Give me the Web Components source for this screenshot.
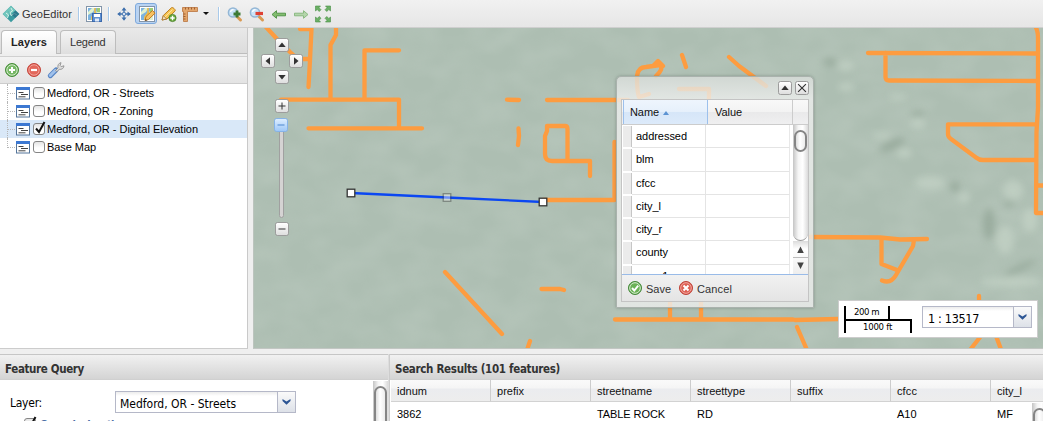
<!DOCTYPE html>
<html lang="en">
<head>
<meta charset="utf-8">
<title>GeoEditor</title>
<style>
html,body{margin:0;width:1043px;height:421px;overflow:hidden;background:#efefef;font:11px/14px "Liberation Sans",Arial,sans-serif;color:#111}
</style>
</head>
<body>
<geo-editor></geo-editor>
<script>
const define = (name, html, setup) => {
  const t = document.createElement('template');
  t.innerHTML = '<style>*{box-sizing:border-box}svg{display:block;overflow:visible}</style>' + html;
  customElements.define(name, class extends HTMLElement {
    constructor() { super(); this.attachShadow({mode: 'open'}).append(t.content.cloneNode(true)); }
    connectedCallback() { if (setup) setup(this, this.shadowRoot); }
  });
};

/* Single-line label; "w" tracks the text out to a set width. */
define('ui-label', `<style>:host{display:inline-block;white-space:nowrap;flex:none}:host([tahoma]){font-family:"DejaVu Sans Condensed","DejaVu Sans",sans-serif;font-stretch:condensed}:host([bold]){font-weight:bold}</style><slot></slot>`, el => {
  const w = +el.getAttribute('w');
  if (!w) return;
  const n = el.textContent.length, cur = el.getBoundingClientRect().width;
  if (cur) el.style.letterSpacing = ((w - cur) / n).toFixed(3) + 'px';
});

const page = (extra = '') => `<rect x=".5" y=".5" width="15" height="15" fill="#fff" stroke="#8395a9"/><rect x="2" y="2" width="12" height="12" fill="#dff0cf"/><path d="M2 6l4-4H2zM2 14V9l5-3 2-4h3l-2 5-4 3-1 4z" fill="#7cb3df"/><path d="M9 2v5l-3 4v3M9 7l5 2" fill="none" stroke="#f3bd3f" stroke-width="1.5"/><path d="M11 2h3v4h-3z" fill="#9ccc74"/>${extra}`;
const lens = s => `<path d="M9.5 10l4 4" stroke="#d99a52" stroke-width="3" stroke-linecap="round"/><circle cx="6" cy="6.5" r="4.6" fill="#c9e3f8" stroke="#93b6d5" stroke-width="1.5"/><path d="M3.5 6a3 3 0 0 1 3-2.4" stroke="#fff" stroke-width="1.3" fill="none"/>${s}`;
const ICONS = {
  logo: `<path d="M8-.3L16.3 8 8 16.3-.3 8z" fill="#3b9ba0"/><path d="M8-.3L3.6 4.1 8 8l4.5-3.7zM-.3 8l4-4L7 8l-3.4 4z" fill="#72c6bd"/><path d="M8 2l1.500 3-2.500 1.500 1 3 3.500-2 2.500 1.500M3 7l2.500 2-1 3" stroke="#d6f1e8" stroke-width="1" fill="none"/><path d="M12.5 4.4L16.3 8l-4 4L9 9z" fill="#286f86" opacity=".75"/>`,
  save: page(`<rect x="6.500" y="7.500" width="9" height="8" fill="#5f91d2" stroke="#3b69ac"/><rect x="8" y="8" width="6" height="3" fill="#fff"/><rect x="9" y="12.500" width="4" height="3" fill="#dfe9f7"/>`),
  move: `<path d="M8 2.500v11M2.500 8h11" stroke="#3f70ad" stroke-width="1.300"/><path d="M8 1.200L5.500 4.500h5zM8 14.800l-2.500-3.300h5zM1.200 8l3.300-2.500v5zM14.800 8l-3.300-2.500v5z" fill="#3f70ad"/><rect x="6.700" y="6.700" width="2.600" height="2.600" fill="#e8eff8" stroke="#3f70ad" stroke-width=".7"/>`,
  edit: page(`<path d="M6 14.500l1-4 6.500-6 2.500 2.700-6.500 6.300z" fill="#f7c261" stroke="#c17b20"/><path d="M6 15l.6-2.200 1.600 1.600z" fill="#654"/>`),
  pencil: `<path d="M1 14l1.300-4.500L10.500 1.700c1-1 4.500 2 3.600 3.300L6 13z" fill="#f6c453" stroke="#bd7f20"/><path d="M1 14l1.300-4.400L5.600 13z" fill="#f3dfc0" stroke="#9a6a28" stroke-width=".7"/><path d="M4 11l7.500-7.500" stroke="#fbe49d"/><circle cx="11.500" cy="12" r="3.600" fill="#68a83c" stroke="#467f24" stroke-width=".8"/><path d="M11.500 9.800v4.400M9.300 12h4.400" stroke="#fff" stroke-width="1.400"/>`,
  ruler: `<path d="M.5 1.500h15v4h-10v10h-4v-10h-1z" fill="#e3a66c" stroke="#b9743f" stroke-width=".8"/><path d="M3.500 1.500v2M6.500 1.500v2M9.500 1.500v2M12.500 1.500v2M1.500 8h2M1.500 10.500h2M1.500 13h2" stroke="#8e4d20" stroke-width=".8"/>`,
  zin: lens(`<path d="M10 4.500v7M6.500 8h7" stroke="#3d7a35" stroke-width="2.800"/>`),
  zout: lens(`<path d="M6.500 7.500H14" stroke="#df4133" stroke-width="3.200"/>`),
  prev: `<path d="M1 8.500l4.500-3.800v2.500h9v2.600h-9v2.500z" fill="#83bd70" stroke="#4c8e42" stroke-width=".9"/>`,
  next: `<path d="M15 8.500l-4.500-3.800v2.500h-9v2.600h9v2.500z" fill="#b4d5ab" stroke="#83b579" stroke-width=".9"/>`,
  extent: `<g fill="#6bb065" stroke="#478d43" stroke-width=".6"><path d="M.5 0h5L4 1.700l2 2L4.200 5.500l-2-2L.5 5z"/><path d="M15.500 0v5l-1.700-1.500-2 2L10 3.700l2-2L10.500 0z"/><path d="M.5 16h5L4 14.300l2-2L4.200 10.500l-2 2L.5 11z"/><path d="M15.500 16v-5l-1.700 1.500-2-2-1.800 1.800 2 2L10.500 16z"/></g>`,
  add: `<circle cx="8" cy="8" r="6.500" fill="#62ad50" stroke="#478c3a"/><circle cx="8" cy="8" r="5.200" fill="#76b865" stroke="#d7edcf"/><path d="M8 5v6M5 8h6" stroke="#fff" stroke-width="2"/>`,
  remove: `<circle cx="8" cy="8" r="6.500" fill="#df5549" stroke="#c2463b"/><circle cx="8" cy="8" r="5.200" fill="#e2685b" stroke="#f2a59c"/><path d="M5 8h6" stroke="#fff" stroke-width="2.200"/>`,
  save2: `<circle cx="8" cy="8" r="6.500" fill="#55a244" stroke="#45883a"/><circle cx="8" cy="8" r="5.300" fill="#6bb257" stroke="#dcefd5"/><path d="M5 8l2.300 2.500L11.200 5.700" stroke="#fff" stroke-width="1.900" fill="none"/>`,
  cancel: `<circle cx="8" cy="8" r="6.500" fill="#d94c3f" stroke="#be4238"/><circle cx="8" cy="8" r="5.300" fill="#dd6054" stroke="#f2aba3"/><path d="M5.500 5.500l5 5m0-5l-5 5" stroke="#fff" stroke-width="2"/>`,
  wrench: `<path d="M2.300 13.700L8 8" stroke="#5684c4" stroke-width="5" stroke-linecap="round"/><path d="M2.300 13.500L7.500 8.300" stroke="#9fc0ea" stroke-width="3" stroke-linecap="round"/><path d="M7.500 8.500L10 6c-.6-2.600.5-4.800 3-5.400l-.8 3 1 1L16 3.800c-.3 2.700-2.300 4-4.900 3.500L9 9.700z" fill="#ddd" stroke="#888" stroke-width=".8"/>`,
  layer: `<rect x=".5" y="2.500" width="13" height="11.500" fill="#fff" stroke="#55759a"/><rect x="0" y="2" width="14" height="3" fill="#3c78d2"/><path d="M2.500 7.500h5M5 9.500h7M2.500 11.800h7" stroke="#444" stroke-width="1"/>`
};
define('ui-icon', `<style>:host{display:block;width:16px;height:16px;flex:none}</style><svg width="16" height="16" viewBox="0 0 16 16"></svg>`, (el, r) => {
  r.querySelector('svg').innerHTML = ICONS[el.getAttribute('name')];
});

define('ui-sep', `<style>:host{display:block;width:2px;height:14px;background:#a9caea;border-right:1px solid #fff;flex:none}</style>`);

define('app-toolbar', `<style>
:host{display:flex;align-items:center;height:28px;padding-left:3px;background:linear-gradient(#f1f1f1,#e6e6e6);border-bottom:1px solid #cfcfcf}
ui-label{margin:1px 6px 0 3px;color:#333}
.on{width:22px;height:21px;padding:2px 2.500px;margin:0 4px 0 2px;border:1px solid #7ea9dc;border-radius:3px;background:#b9d3f2}
.car{margin:0 9px 0 5px;border:3px solid transparent;border-top:3.500px solid #111;border-bottom:0}
ui-icon{margin-right:6px}.on ui-icon{margin:0}
</style>
<ui-icon name="logo" style="margin:0"></ui-icon><ui-label w="50">GeoEditor</ui-label><ui-sep></ui-sep>
<ui-icon name="save" style="margin-left:6px"></ui-icon><ui-sep></ui-sep>
<ui-icon name="move" style="margin:0 1px 0 6px"></ui-icon><span class="on"><ui-icon name="edit"></ui-icon></span>
<ui-icon name="pencil" style="margin-right:5px"></ui-icon><ui-icon name="ruler" style="margin:0"></ui-icon><i class="car"></i><ui-sep style="margin-right:7px"></ui-sep>
<ui-icon name="zin"></ui-icon><ui-icon name="zout"></ui-icon><ui-icon name="prev"></ui-icon><ui-icon name="next"></ui-icon><ui-icon name="extent"></ui-icon>`);

define('ui-tab', `<style>
:host{display:block;height:24px;padding:4px 9px 0;border:1px solid #bdbdbd;border-bottom:0;border-radius:4px 4px 0 0;background:linear-gradient(#f4f4f4,#dedede);color:#333;text-align:center}
:host([active]){background:linear-gradient(#fff,#eee);height:25px;font-weight:bold;color:#222}
</style><slot></slot>`);

define('ui-check', `<style>:host{display:block;position:relative;width:12px;height:12px;border:1px solid #858585;border-radius:3px;background:linear-gradient(#e4e4e4,#fff 60%);flex:none}svg{position:absolute;left:0;top:-4px;display:none}:host([checked]) svg{display:block}</style><svg width="12" height="14"><path d="M2 8.500l3 3.500L10.500 2" fill="none" stroke="#111" stroke-width="2"/></svg>`);

define('layer-row', `<style>
:host{display:flex;align-items:center;height:18px;padding-left:7px;color:#000}
:host([selected]){background:#d9e8f8}
.l{width:8px;height:18px;border-left:1px dotted #b5b5b5;margin-right:1px;background:repeating-linear-gradient(90deg,#b9b9b9 0 1px,transparent 1px 2px) 0 9px/7px 1px no-repeat}
:host([last]) .l{height:10px;align-self:flex-start}
ui-check{margin:0 2px 0 3px}
ui-icon{width:14px}
</style><i class="l"></i><ui-icon name="layer"></ui-icon><ui-check></ui-check><slot></slot>`, (el, r) => {
  r.querySelector('ui-check').toggleAttribute('checked', el.hasAttribute('checked'));
});

define('layer-panel', `<style>
:host{display:flex;flex-direction:column;width:248px;border-right:1px solid #c9c9c9;background:#fff}
.tabs{display:flex;gap:3px;height:26px;padding:2px 0 0 1px;background:linear-gradient(#e9e9e9,#dcdcdc);border-bottom:1px solid #bdbdbd}
.gap{height:3px;background:#eee;border-bottom:1px solid #d0d0d0}
.tools{display:flex;align-items:center;height:27px;padding-left:4px;gap:6px;background:linear-gradient(#f3f3f3,#e3e3e3);border-bottom:1px solid #ccc}
</style>
<div class="tabs"><ui-tab active><ui-label w="36">Layers</ui-label></ui-tab><ui-tab><ui-label w="35.500">Legend</ui-label></ui-tab></div>
<div class="gap"></div>
<div class="tools"><ui-icon name="add"></ui-icon><ui-icon name="remove"></ui-icon><ui-icon name="wrench"></ui-icon></div>
<layer-row><ui-label w="107">Medford, OR - Streets</ui-label></layer-row>
<layer-row><ui-label w="106">Medford, OR - Zoning</ui-label></layer-row>
<layer-row selected checked><ui-label w="151">Medford, OR - Digital Elevation</ui-label></layer-row>
<layer-row last><ui-label w="49">Base Map</ui-label></layer-row>`);

define('map-button', `<style>:host{display:block;position:absolute;width:14px;height:14px;border:1px solid #9c9c9c;border-radius:2.500px;background:linear-gradient(#fff,#dedede)}:host([blue]){background:linear-gradient(#dcedff,#9fc8f7);border-color:#85b3e8}svg{margin:-1px}</style><svg width="14" height="14"><path/></svg>`, (el, r) => {
  const p = {up:'M7 4.500l3.700 4.500H3.300z', down:'M7 9.500L3.300 5h7.400z', left:'M4.500 7L9 3.300v7.400z', right:'M9.500 7L5 3.300v7.400z', plus:'M6.500 3.500h1v3h3v1h-3v3h-1v-3h-3v-1h3z', minus:'M3.500 6.500h7v1h-7z', close:'M3.500 2.700L7 6.200l3.500-3.500.8.800L7.800 7l3.500 3.500-.8.800L7 7.800l-3.500 3.500-.8-.8L6.200 7 2.700 3.500z'}[el.getAttribute('kind')];
  const path = r.querySelector('path');
  path.setAttribute('d', p); path.setAttribute('fill', el.hasAttribute('blue') ? '#4a86cf' : '#333');
});

define('ui-combo', `<style>:host{display:flex;height:22px;border:1px solid #b5b8c8;background:linear-gradient(#ececec,#fff 4px);padding:5px 0 0 4px;justify-content:space-between;color:#000;font-size:12px}
.t{width:18px;height:20px;margin-top:-5px;border-left:1px solid #b5b8c8;background:linear-gradient(#fafafa,#dde1e8);flex:none}</style><slot></slot><span class="t"><svg width="17" height="20"><path d="M4.500 7l4 2.500 4-2.500v2l-4 3.700-4-3.700z" fill="#2c5594"/></svg></span>`);

define('scale-box', `<style>
:host{position:absolute;right:5px;bottom:10px;width:200px;height:38px;display:flex;padding:5px 5px 0 4px;background:#fff;border:1px solid #ccc;color:#000}
.s{width:68px;margin:0 10px 0 1px;font-size:9.500px;line-height:12px}
.a{width:46px;height:13px;border:solid #000;border-width:0 2px;padding-left:8px;}
.b{height:14px;border:solid #000;border-width:2px 2px 0;padding-left:17px}
ui-combo{flex:1}
</style><div class="s"><div class="a"><ui-label tahoma w="25">200 m</ui-label></div><div class="b"><ui-label tahoma w="29">1000 ft</ui-label></div></div>
<ui-combo><ui-label tahoma w="51" style="font-size:12.500px;margin-left:1px">1 : 13517</ui-label></ui-combo>`);

define('ui-scroll', `<style>:host{display:block;position:relative;width:15px;background:linear-gradient(90deg,#c4c4c4,#f5f5f5 35%,#fff 65%,#dadada)}
i{display:block;width:13px;margin:0 1px;border:2px solid #858585;border-radius:7px;background:linear-gradient(90deg,#ddd,#fff 45%,#ececec)}</style><i></i>`, (el, r) => {
  const i = r.querySelector('i');
  i.style.height = el.getAttribute('thumb') + 'px';
  i.style.marginTop = '0'; el.style.paddingTop = el.getAttribute('offset') + 'px'; el.style.boxSizing = 'border-box';
});

define('attr-row', `<style>:host{display:flex;height:23.250px;padding:0 3px 0 1px;flex:none}
.g{width:9px;margin:1px 0;background:#ebebeb;border-right:1px solid #c6c6c6}
.n{width:74px;padding:4px 0 0 4px;border-bottom:1px solid #e4e4e4;border-right:1px solid #e4e4e4;color:#000}
.v{flex:1;border-bottom:1px solid #e4e4e4;border-right:1px solid #e8e8e8}</style><span class="g"></span><span class="n"><slot></slot></span><span class="v"></span>`);

define('feature-window', `<style>
:host{position:absolute;left:362px;top:48px;width:198px;height:232px;display:flex;flex-direction:column;padding:22px 4px 5px 4px;border:1px solid #aab2ad;border-radius:5px 5px 0 0;background:linear-gradient(rgba(218,222,219,.8),rgba(238,239,238,.8) 22px,rgba(236,237,236,.82));box-shadow:0 0 3px rgba(80,90,85,.45)}
.box{flex:1;display:flex;flex-direction:column;border:1px solid #c4c4c4;background:#fff;overflow:hidden}
.h{display:flex;height:25px;flex:none;background:linear-gradient(#f9f9f9,#f3f3f3 50%,#e9e9ea 51%,#efeff0);border-bottom:1px solid #ccc;line-height:25px;color:#111}
.h span:nth-child(1){width:85px;margin-left:1px;border:solid #9cc0ec;border-width:0 1px;padding-left:6px;background:linear-gradient(#eef5fd,#e6f0fb 50%,#d6e6f8 51%,#dceafa)}
.h span:nth-child(2){width:85px;border-right:1px solid #ccc;padding-left:7px}
.up{display:inline-block;border:3.500px solid transparent;border-bottom:4px solid #5c93d2;border-top:0;margin-left:4px;vertical-align:1px}
.m{display:flex;flex:1;min-height:0}.r{flex:1;display:flex;flex-direction:column;overflow:hidden}
.sc{width:15px;display:flex;flex-direction:column}
.end{height:33px;background:linear-gradient(#dcdcdc,#fff 8px,#eee);position:relative}
.f{height:27px;flex:none;display:flex;align-items:center;padding-left:5px;border-top:1px solid #99bbe8;background:linear-gradient(#f1f1f1,#e4e4e4);color:#333}
.f ui-label{margin-top:2px!important}
</style>
<map-button kind="up" style="left:161px;top:4px"></map-button><map-button kind="close" style="left:178px;top:4px"></map-button>
<div class="box"><div class="h"><span><ui-label w="29">Name</ui-label><i class="up"></i></span><span><ui-label w="27">Value</ui-label></span></div>
<div class="m"><div class="r"><attr-row><ui-label w="51">addressed</ui-label></attr-row><attr-row>blm</attr-row><attr-row>cfcc</attr-row><attr-row><ui-label w="25">city_l</ui-label></attr-row><attr-row><ui-label w="26">city_r</ui-label></attr-row><attr-row><ui-label w="32">county</ui-label></attr-row><attr-row>cracc1</attr-row></div>
<div class="sc"><ui-scroll thumb="22" offset="5" style="flex:1;border-radius:0 0 8px 8px;border-bottom:1px solid #999"></ui-scroll><div class="end"><svg width="15" height="33"><path d="M7.500 5.500l3.300 6.500H4.200zM7.500 28l3.300-6.500H4.200z" fill="#444"/><path d="M0 16.500h15" stroke="#bbb"/></svg></div></div></div>
<div class="f"><ui-icon name="save2"></ui-icon><ui-label w="25" style="margin:0 7px 0 3px">Save</ui-label><ui-icon name="cancel"></ui-icon><ui-label w="35" style="margin-left:3px">Cancel</ui-label></div></div>`);

define('map-view', `<style>:host{display:block;position:relative;width:790px;height:321px;overflow:hidden;background:#aebfb2;border-left:1px solid #bcc4be;border-bottom:1px solid #c2c6c3}
.map{position:absolute;left:-1px;top:0}
.track{position:absolute;left:26px;top:100px;width:5px;height:90px;background:#d5d3d3;border:1px solid #a0a0a0;border-radius:3px}
</style>
<svg class="map" width="790" height="320" viewBox="253 28 790 320">
<defs><filter id="soft" x="-60%" y="-60%" width="220%" height="220%"><feGaussianBlur stdDeviation="3.500"/></filter>
<filter id="grain" x="0" y="0" width="100%" height="100%"><feTurbulence type="fractalNoise" baseFrequency=".028 .04" numOctaves="2" seed="7"/><feColorMatrix values="0 0 0 0 .78  0 0 0 0 .84  0 0 0 0 .79  .9 0 0 0 -.28"/></filter></defs>
<rect x="253" y="28" width="790" height="320" fill="#adbeb2"/>
<rect x="253" y="28" width="790" height="320" filter="url(#grain)" opacity=".27"/>
<g filter="url(#soft)" opacity=".8"><g fill="#c2d1c5"><ellipse cx="846" cy="66" rx="9" ry="5"/><ellipse cx="846" cy="87" rx="8" ry="4"/><ellipse cx="898" cy="97" rx="10" ry="3"/><ellipse cx="918" cy="123" rx="7" ry="5"/><ellipse cx="882" cy="136" rx="10" ry="3"/><ellipse cx="904" cy="153" rx="8" ry="5"/><ellipse cx="930" cy="183" rx="15" ry="6"/><ellipse cx="964" cy="198" rx="6" ry="5"/><ellipse cx="1013" cy="190" rx="10" ry="10"/><ellipse cx="1005" cy="240" rx="9" ry="14"/><ellipse cx="1010" cy="282" rx="30" ry="5"/><ellipse cx="1030" cy="220" rx="8" ry="12"/></g>
<g fill="#95a89a"><ellipse cx="830" cy="62" rx="7" ry="4"/><ellipse cx="892" cy="145" rx="14" ry="5" transform="rotate(-25 892 145)"/><ellipse cx="918" cy="114" rx="7" ry="3"/><ellipse cx="955" cy="187" rx="5" ry="6"/><ellipse cx="989" cy="224" rx="6" ry="16"/><ellipse cx="1009" cy="204" rx="6" ry="3"/><ellipse cx="1020" cy="268" rx="18" ry="3" transform="rotate(-25 1020 268)"/></g></g>
<g fill="none" stroke="#fd9c40" stroke-width="4.300" stroke-linecap="round" stroke-linejoin="round">
<path d="M265 26L277 39 290 52 298 59H309M300 29H311.500L310 60 308.500 87M336 27V35L330.500 45V99M399 50.300H364.500V99M281 99.700H399V128M308.500 128.300H422"/>
<path d="M507 99.700L519 100M547 100H628M518.500 128.500L519 136 518 145M547 126V131L545 136V154Q545 161 552 161H590V176M547 126H565Q567.500 126 567.500 129V161M543 200H614.500V142"/>
<path d="M649 94L639 97Q637 92 637 76 638 67 646 67L660 65Q664 69 656 76M653 66L658 61 663 66M682 55L686 67M729 57L739 66 766 86M679 89H709V108"/>
<path d="M868 53L1038 53.500M885.500 53V77Q885.500 80.500 889 80.500L1038 81M1035 26Q1038 30 1038 38V108L1036.500 132 1036 213H1046M1038 185.500H1046M1036 124.300H948V134Q948 137 951 139L976 157.500Q979 160 983 160H1036"/>
<path d="M810 237L880 237.500 900 239.500 927 239M881.500 238V264L897 270M914 240L913 246 896 275Q891 284 882 280.500M615 319.500H793M795 320L838 319M670 300V319M701 300V319M797 327L807 350M979 296V310M981 336L970 350M996 336L1002 352M445 272L502 334M541.500 289H560L564 290M530 341L527 350"/></g>
<path d="M351 193L447 197.500 543 202" stroke="#0b47f2" stroke-width="2.300" fill="none"/>
<g stroke="#333" stroke-width="1.300" fill="#fff"><rect x="347.200" y="189.200" width="7.600" height="7.600"/><rect x="539.200" y="198.200" width="7.600" height="7.600"/><rect x="443.200" y="193.700" width="7.600" height="7.600" opacity=".4"/></g>
</svg>
<map-button kind="up" style="left:21px;top:10px"></map-button><map-button kind="left" style="left:7px;top:26px"></map-button><map-button kind="right" style="left:35px;top:26px"></map-button><map-button kind="down" style="left:21px;top:42px"></map-button>
<div class="track" style="left:25px"></div>
<map-button kind="plus" style="left:21px;top:71px"></map-button><map-button kind="minus" blue style="left:20px;top:90px"></map-button><map-button kind="minus" style="left:21px;top:194px"></map-button>
<feature-window></feature-window><scale-box></scale-box>`);

define('panel-header', `<style>:host{display:flex;align-items:center;height:26px;flex:none;padding:3px 0 0 5px;background:linear-gradient(#f1f1f1,#d4d4d4);border-top:1px solid #c6c6c6;border-bottom:1px solid #d0d0d0;color:#333;font-size:11.500px}</style><slot></slot>`);

define('query-panel', `<style>:host{display:flex;flex-direction:column;width:388px;background:#fff;overflow:hidden}
.b{display:flex;flex:1;justify-content:space-between;color:#000}
.form{padding:11px 0 0 10px}.row{display:flex;align-items:center}
.row>ui-label{font-size:12px;margin-top:2px}
ui-combo{width:181px;margin-left:73px}
.q{display:flex;gap:4px;margin:5px 0 0 14px;color:#4a6ea5}
ui-scroll{margin:1px 0 0}
</style><panel-header><ui-label tahoma bold w="79">Feature Query</ui-label></panel-header>
<div class="b"><div class="form"><div class="row"><ui-label tahoma w="32">Layer:</ui-label><ui-combo><ui-label tahoma w="116">Medford, OR - Streets</ui-label></ui-combo></div>
<div class="q"><ui-check checked></ui-check><ui-label tahoma bold w="86">Query by location</ui-label></div></div><ui-scroll thumb="60" offset="5"></ui-scroll></div>`);

define('grid-col', `<style>:host{display:block;width:100px;flex:none}
.h{height:22px;padding:4px 0 0 6px;border-right:1px solid #cdcdcd;border-bottom:1px solid #d2d2d2;background:linear-gradient(#fafafa,#f5f5f5 8px,#ebecef 9px,#ededed);color:#111}
.c{padding:5px 0 0 6px;color:#000}</style><div class="h"><slot name="h"></slot></div><div class="c"><slot></slot></div>`);

define('results-panel', `<style>:host{display:flex;flex-direction:column;width:654px;background:#fff;overflow:hidden;border-left:1px solid #ccc;margin-left:1px;flex:none;position:relative}
.g{display:flex;padding-left:1px}ui-scroll{position:absolute;left:642px;top:49px;height:30px}</style>
<panel-header><ui-label tahoma bold w="165">Search Results (101 features)</ui-label></panel-header>
<div class="g"><grid-col><ui-label w="30" slot="h">idnum</ui-label>3862</grid-col><grid-col><ui-label w="27" slot="h">prefix</ui-label></grid-col><grid-col><ui-label w="55" slot="h">streetname</ui-label><ui-label w="68">TABLE ROCK</ui-label></grid-col><grid-col><ui-label w="48" slot="h">streettype</ui-label>RD</grid-col><grid-col><ui-label w="26" slot="h">suffix</ui-label></grid-col><grid-col><ui-label w="20" slot="h">cfcc</ui-label>A10</grid-col><grid-col><ui-label w="25" slot="h">city_l</ui-label>MF</grid-col></div><ui-scroll thumb="40" offset="5"></ui-scroll>`);

define('geo-editor', `<style>:host{display:flex;flex-direction:column;width:1043px;height:421px;background:#efefef}
.mid{display:flex;height:321px;gap:5px}.low{display:flex;height:67px;margin-top:5px;background:#ddd}
layer-panel{border-bottom:1px solid #ccc}</style>
<app-toolbar></app-toolbar><div class="mid"><layer-panel></layer-panel><map-view></map-view></div><div class="low"><query-panel></query-panel><results-panel></results-panel></div>`);
</script>
</body>
</html>
